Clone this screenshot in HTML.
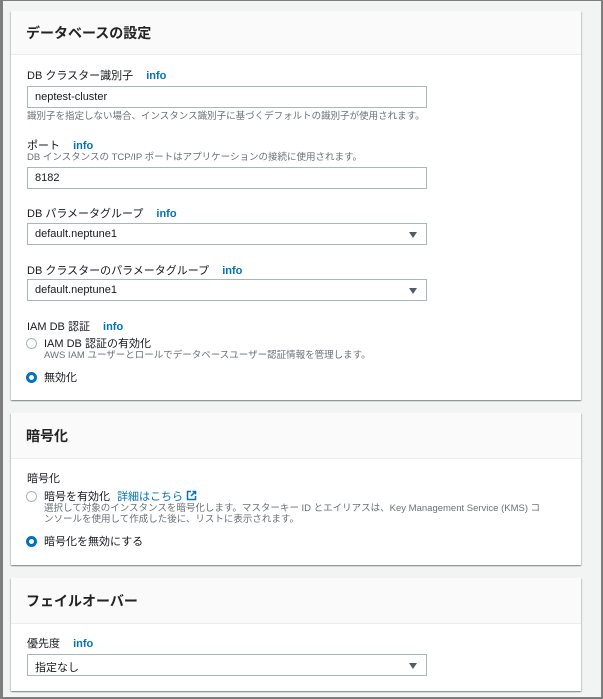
<!DOCTYPE html>
<html><head><meta charset="utf-8"><style>
*{box-sizing:border-box;margin:0;padding:0}
body{width:603px;height:699px;background:#f2f3f3;font-family:"Liberation Sans","Noto Sans CJK JP",sans-serif;color:#16191f;position:relative;overflow:hidden;border-left:3px solid #7d7d7d;border-right:2px solid #7d7d7d;border-bottom:2px solid #7d7d7d;border-top:1px solid #7d7d7d}
.panel{position:absolute;left:8px;width:570px;background:#fff;box-shadow:0 1px 1px 0 rgba(0,28,36,.3),1px 1px 1px 0 rgba(0,28,36,.15),-1px 1px 1px 0 rgba(0,28,36,.15)}
.hd{position:absolute;left:0;top:0;width:100%;background:#fafafa;border-bottom:1px solid #eaeded;font-size:14px;font-weight:bold;padding-left:15px;color:#232323}
.lbl{position:absolute;font-size:11px;color:#16191f}
.info{color:#0073bb;font-weight:bold;margin-left:10px}
.desc{position:absolute;font-size:9.5px;color:#687078;line-height:11px}
.inp{position:absolute;left:16px;width:400px;height:22px;border:1px solid #aab7b8;font-size:11px;padding:4px 7px;background:#fff}
.sel:after{content:"";position:absolute;right:9px;top:8px;border-left:4px solid transparent;border-right:4px solid transparent;border-top:6px solid #545b64}
.rad{position:absolute;width:11px;height:11px;border-radius:50%;border:1px solid #aab7b8;background:#fff}
.rad.on{border:3px solid #0073bb}
.rt{position:absolute;font-size:11px}
</style></head><body>
<div class="panel" style="top:10px;height:389px">
<div class="hd" style="height:44px;line-height:44px">データベースの設定</div>
<div class="lbl" style="left:16px;top:56px">DB クラスター識別子 <span class="info">info</span></div>
<div class="inp" style="top:75px">neptest-cluster</div>
<div class="desc" style="left:16px;top:100px">識別子を指定しない場合、インスタンス識別子に基づくデフォルトの識別子が使用されます。</div>
<div class="lbl" style="left:16px;top:126px">ポート <span class="info">info</span></div>
<div class="desc" style="left:16px;top:141px">DB インスタンスの TCP/IP ポートはアプリケーションの接続に使用されます。</div>
<div class="inp" style="top:156px">8182</div>
<div class="lbl" style="left:16px;top:194px">DB パラメータグループ <span class="info">info</span></div>
<div class="inp sel" style="top:212px">default.neptune1</div>
<div class="lbl" style="left:16px;top:251px">DB クラスターのパラメータグループ <span class="info">info</span></div>
<div class="inp sel" style="top:268px">default.neptune1</div>
<div class="lbl" style="left:16px;top:307px">IAM DB 認証 <span class="info">info</span></div>
<div class="rad" style="left:15px;top:327px"></div>
<div class="rt" style="left:33px;top:324px">IAM DB 認証の有効化</div>
<div class="desc" style="left:33px;top:339px">AWS IAM ユーザーとロールでデータベースユーザー認証情報を管理します。</div>
<div class="rad on" style="left:15px;top:361px"></div>
<div class="rt" style="left:33px;top:358px">無効化</div>
</div>
<div class="panel" style="top:412px;height:152px">
<div class="hd" style="height:46px;line-height:46px">暗号化</div>
<div class="lbl" style="left:16px;top:57px">暗号化</div>
<div class="rad" style="left:15px;top:78px"></div>
<div class="rt" style="left:33px;top:75px">暗号を有効化 <span style="color:#0073bb;margin-left:4px">詳細はこちら</span> <svg width="11" height="11" viewBox="0 0 11 11" style="vertical-align:-1px"><path d="M5 1.5H1.5v8h8V6M6.5 1.5h3v3M9.5 1.5 5 6" fill="none" stroke="#0073bb" stroke-width="1.5"/></svg></div>
<div class="desc" style="left:33px;top:90px">選択して対象のインスタンスを暗号化します。マスターキー ID とエイリアスは、Key Management Service (KMS) コ<br>ンソールを使用して作成した後に、リストに表示されます。</div>
<div class="rad on" style="left:15px;top:123px"></div>
<div class="rt" style="left:33px;top:120px">暗号化を無効にする</div>
</div>
<div class="panel" style="top:577px;height:113px">
<div class="hd" style="height:46px;line-height:46px">フェイルオーバー</div>
<div class="lbl" style="left:16px;top:57px">優先度 <span class="info">info</span></div>
<div class="inp sel" style="top:76px">指定なし</div>
</div>
</body></html>
